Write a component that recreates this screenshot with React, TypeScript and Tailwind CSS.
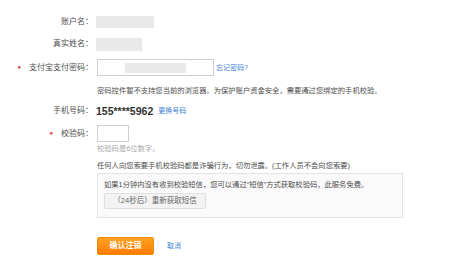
const cjk = "font-['Liberation_Sans','Noto_Sans_CJK_SC',sans-serif]";

function Label({ text, required }: { text: string; required?: boolean }) {
  return (
    <div className="w-[95px] shrink-0 pr-[2px] text-right text-[8px] leading-[10px] text-[#4d4d4d]">
      {required && <span className="mr-[8px] text-[6px] align-[1px] text-[#e4393c]">●</span>}
      {text}
    </div>
  );
}

export default function App() {
  return (
    <div className={`w-[461px] h-[265px] bg-white ${cjk} overflow-hidden`}>
      <div className="pt-[15px] flex flex-col">
        {/* 账户名 */}
        <div className="flex items-center h-[14px]">
          <Label text="账户名：" />
          <div className="ml-[1px] w-[58px] h-[12px] bg-[#e9e9e9]" />
        </div>

        {/* 真实姓名 */}
        <div className="flex items-center h-[14px] mt-[8px]">
          <Label text="真实姓名：" />
          <div className="ml-[1px] w-[46px] h-[13px] bg-[#e9e9e9]" />
        </div>

        {/* 支付密码 */}
        <div className="flex items-center h-[17px] mt-[8px]">
          <Label text="支付宝支付密码：" required />
          <div className="ml-[2px] w-[117px] h-[17px] border border-[#cfcfcf] bg-white flex items-center pl-[27px]">
            <div className="w-[61px] h-[10px] bg-[#e9e9e9]" />
          </div>
          <a className="ml-[2px] text-[7px] leading-[10px] text-[#3d7fd6]">忘记密码?</a>
        </div>

        <div className="ml-[97px] mt-[10px] text-[7.3px] leading-[10px] text-[#4d4d4d]">
          密码控件暂不支持您当前的浏览器。为保护账户资金安全，需要通过您绑定的手机校验。
        </div>

        {/* 手机号码 */}
        <div className="flex items-center h-[14px] mt-[8px]">
          <Label text="手机号码：" />
          <span className="ml-[1px] text-[10.5px] leading-[14px] font-bold text-[#333]">155****5962</span>
          <a className="ml-[5px] text-[7px] leading-[10px] text-[#3d7fd6]">更换号码</a>
        </div>

        {/* 校验码 */}
        <div className="flex items-center h-[17px] mt-[7px]">
          <Label text="校验码：" required />
          <div className="ml-[2px] w-[32px] h-[17px] border border-[#cfcfcf] bg-white" />
        </div>

        <div className="ml-[97px] mt-[2px] text-[7.3px] leading-[10px] text-[#aaa]">校验码是6位数字。</div>

        <div className="ml-[97px] mt-[7px] text-[7.3px] leading-[10px] text-[#4d4d4d]">
          任何人向您索要手机校验码都是诈骗行为，切勿泄露。(工作人员不会向您索要)
        </div>

        <div className="ml-[97px] mt-[2px] w-[306px] h-[45px] border border-[#e3e3e3] bg-[#fafafa] pl-[6px] pt-[6px]">
          <div className="text-[7.3px] leading-[10px] text-[#4d4d4d]">
            如果1分钟内没有收到校验短信，您可以通过“短信”方式获取校验码，此服务免费。
          </div>
          <div className="mt-[3px] w-[102px] h-[16px] border border-[#e0e0e0] bg-[#f3f3f3] rounded-[2px] flex items-center justify-center text-[7.5px] text-[#666]">
            （24秒后）重新获取短信
          </div>
        </div>

        <div className="ml-[97px] mt-[19px] flex items-center">
          <button className="w-[57px] h-[18px] rounded-[2px] border border-[#f08a00] bg-gradient-to-b from-[#ffa21f] to-[#ff7b00] text-white text-[8px] font-bold">
            确认注销
          </button>
          <a className="ml-[13px] text-[7px] text-[#3d7fd6]">取消</a>
        </div>
      </div>
    </div>
  );
}
